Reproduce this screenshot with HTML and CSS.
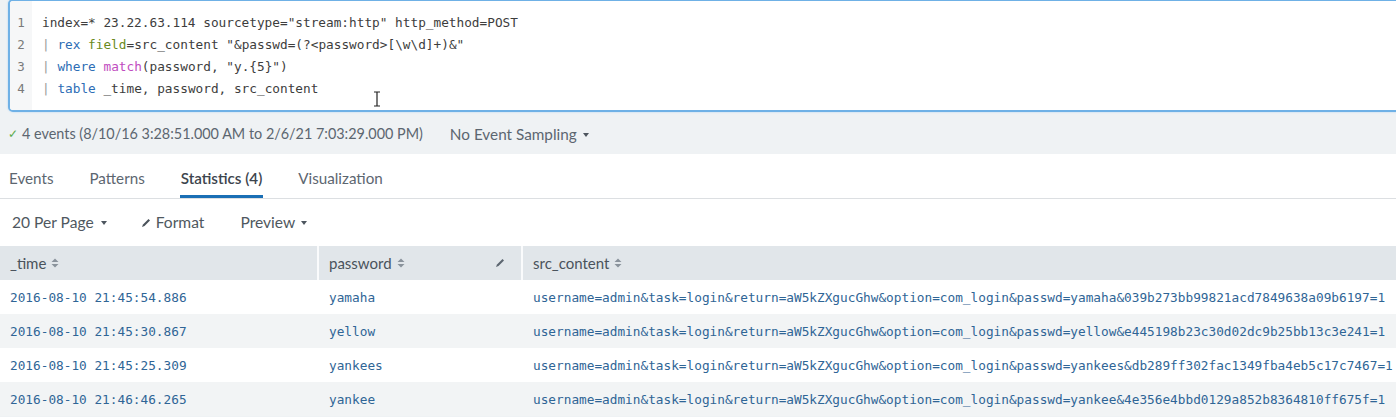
FILE: index.html
```html
<!DOCTYPE html>
<html>
<head>
<meta charset="utf-8">
<link rel="stylesheet" href="styles.css">
</head>
<body>
<div class="search">
  <div class="editor">
    <div class="gutter">
      <div>1</div><div>2</div><div>3</div><div>4</div>
    </div>
    <div class="code">
      <div class="line">index=* 23.22.63.114 sourcetype="stream:http" http_method=POST</div>
      <div class="line"><span class="pipe">|</span> <span class="cmd">rex</span> <span class="arg">field</span>=src_content "&amp;passwd=(?&lt;password&gt;[\w\d]+)&amp;"</div>
      <div class="line"><span class="pipe">|</span> <span class="cmd">where</span> <span class="fn">match</span>(password, "y.{5}")</div>
      <div class="line"><span class="pipe">|</span> <span class="cmd">table</span> _time, password, src_content</div>
    </div>
    <svg class="ibeam" width="8" height="16" viewBox="0 0 8 16"><path d="M1 1h6M4 1v14M1 15h6" stroke="#222" stroke-width="1.2" fill="none"/></svg>
  </div>
</div>

<div class="status">
  <span class="check">&#10003;</span>
  <span>4 events (8/10/16 3:28:51.000 AM to 2/6/21 7:03:29.000 PM)</span>
  <span class="sampling">No Event Sampling<span class="caret"></span></span>
</div>

<div class="tabs">
  <div class="tab">Events</div>
  <div class="tab">Patterns</div>
  <div class="tab active">Statistics (4)</div>
  <div class="tab">Visualization</div>
</div>

<div class="toolbar">
  <span class="tool t1">20 Per Page<span class="caret"></span></span>
  <span class="tool t2"><svg class="pencil" width="10" height="10" viewBox="0 0 10 10"><path d="M1 9 L2 6.5 L7.5 1 L9 2.5 L3.5 8 Z" fill="#4a525a"/></svg>Format</span>
  <span class="tool">Preview<span class="caret"></span></span>
</div>

<div class="table">
  <div class="row head">
    <div class="cell">_time <svg class="sort" width="8" height="10" viewBox="0 0 8 10"><path d="M4 0.5 L7.5 4 H0.5Z M4 9.5 L7.5 6 H0.5Z" fill="#8a939c"/></svg></div>
    <div class="cell sep">password <svg class="sort" width="8" height="10" viewBox="0 0 8 10"><path d="M4 0.5 L7.5 4 H0.5Z M4 9.5 L7.5 6 H0.5Z" fill="#8a939c"/></svg>
      <svg class="hpencil" width="10" height="10" viewBox="0 0 10 10"><path d="M1 9 L2 6.5 L7.5 1 L9 2.5 L3.5 8 Z" fill="#5c6670"/></svg></div>
    <div class="cell sep">src_content <svg class="sort" width="8" height="10" viewBox="0 0 8 10"><path d="M4 0.5 L7.5 4 H0.5Z M4 9.5 L7.5 6 H0.5Z" fill="#8a939c"/></svg></div>
  </div>
  <div class="row">
    <div class="cell mono">2016-08-10 21:45:54.886</div>
    <div class="cell sep mono">yamaha</div>
    <div class="cell sep mono">username=admin&amp;task=login&amp;return=aW5kZXgucGhw&amp;option=com_login&amp;passwd=yamaha&amp;039b273bb99821acd7849638a09b6197=1</div>
  </div>
  <div class="row alt">
    <div class="cell mono">2016-08-10 21:45:30.867</div>
    <div class="cell sep mono">yellow</div>
    <div class="cell sep mono">username=admin&amp;task=login&amp;return=aW5kZXgucGhw&amp;option=com_login&amp;passwd=yellow&amp;e445198b23c30d02dc9b25bb13c3e241=1</div>
  </div>
  <div class="row">
    <div class="cell mono">2016-08-10 21:45:25.309</div>
    <div class="cell sep mono">yankees</div>
    <div class="cell sep mono">username=admin&amp;task=login&amp;return=aW5kZXgucGhw&amp;option=com_login&amp;passwd=yankees&amp;db289ff302fac1349fba4eb5c17c7467=1</div>
  </div>
  <div class="row alt">
    <div class="cell mono">2016-08-10 21:46:46.265</div>
    <div class="cell sep mono">yankee</div>
    <div class="cell sep mono">username=admin&amp;task=login&amp;return=aW5kZXgucGhw&amp;option=com_login&amp;passwd=yankee&amp;4e356e4bbd0129a852b8364810ff675f=1</div>
  </div>
</div>
</body>
</html>
```

FILE: styles.css
```css
html, body {
  margin: 0;
  padding: 0;
}
body {
  background: #eff2f4;
  font-family: Lato, "Open Sans", sans-serif;
  color: #5c6670;
  overflow: hidden;
  width: 1396px;
  height: 417px;
}
.search {
  padding-left: 8px;
  height: 112px;
}
.editor {
  position: relative;
  margin-top: -1px;
  margin-right: -8px;
  height: 109px;
  border: 2px solid #6fb1e6;
  border-radius: 5px;
  background: #fff;
  display: flex;
  box-shadow: 0 0 2px #a9d2f3;
}
.gutter {
  width: 22px;
  background: #f6f7f8;
  padding-top: 11px;
  font-family: "DejaVu Sans Mono", monospace;
  font-size: 12.5px;
  line-height: 22px;
  color: #7a7a7a;
  text-align: center;
  border-top-left-radius: 3px;
  border-bottom-left-radius: 3px;
}
.code {
  padding: 11px 0 0 10px;
  font-family: "DejaVu Sans Mono", monospace;
  font-size: 12.75px;
  line-height: 22px;
  color: #3d3d3d;
}
.line {
  white-space: pre;
  height: 22px;
}
.pipe { color: #9a9a9a; }
.cmd { color: #2d6db5; }
.arg { color: #6b8a1c; }
.fn { color: #c04cc0; }
.ibeam {
  position: absolute;
  left: 363px;
  top: 90px;
}
.status {
  height: 43px;
  display: flex;
  align-items: center;
  padding-left: 8px;
  padding-top: 2px;
  box-sizing: border-box;
  font-size: 14.4px;
  color: #5c6670;
}
.check {
  color: #5cab4c;
  font-size: 12px;
  margin-right: 4px;
}
.sampling {
  margin-left: 27px;
  font-size: 15.3px;
}
.caret {
  display: inline-block;
  width: 0;
  height: 0;
  border-left: 3.5px solid transparent;
  border-right: 3.5px solid transparent;
  border-top: 4px solid #4d555e;
  vertical-align: middle;
  margin-left: 6px;
  position: relative;
  top: -1px;
}
.tabs {
  background: #fff;
  height: 44px;
  border-bottom: 1px solid #dcdfe2;
  display: flex;
  padding-left: 9px;
  gap: 36px;
  box-sizing: content-box;
}
.tab {
  font-size: 15.2px;
  color: #5c6670;
  padding-top: 15px;
  height: 26px;
  box-sizing: content-box;
  border-bottom: 3px solid transparent;
}
.tab.active {
  color: #3c444d;
  font-weight: 600;
  border-bottom-color: #1a6fb5;
  padding-left: 1px;
  padding-right: 1px;
  margin-left: -1px;
  margin-right: -1px;
}
.toolbar {
  background: #fff;
  height: 47px;
  display: flex;
  align-items: center;
  padding-left: 12px;
  padding-bottom: 2px;
  box-sizing: border-box;
  font-size: 15.6px;
  color: #4f5860;
}
.t1 { margin-right: 34px; }
.t1 .caret { margin-left: 7px; }
.t2 { margin-right: 36px; }
.pencil {
  margin-right: 5px;
}
.table {
  background: #fff;
}
.row {
  display: grid;
  grid-template-columns: 317px 204px 1fr;
  height: 34px;
  align-items: center;
}
.row.alt {
  background: #f2f4f5;
}
.row.head {
  background: #e1e6ea;
  font-size: 15px;
  color: #4a535c;
}
.cell {
  padding-left: 10px;
  height: 34px;
  display: flex;
  align-items: center;
  white-space: nowrap;
  box-sizing: border-box;
}
.cell.sep {
  border-left: 2px solid transparent;
}
.head .cell.sep {
  border-left-color: #fafbfc;
}
.sort {
  margin-left: 5px;
}
.hpencil {
  margin-left: auto;
  margin-right: 16px;
}
.mono {
  font-family: "DejaVu Sans Mono", monospace;
  font-size: 12.75px;
  color: #2f6596;
}
```
